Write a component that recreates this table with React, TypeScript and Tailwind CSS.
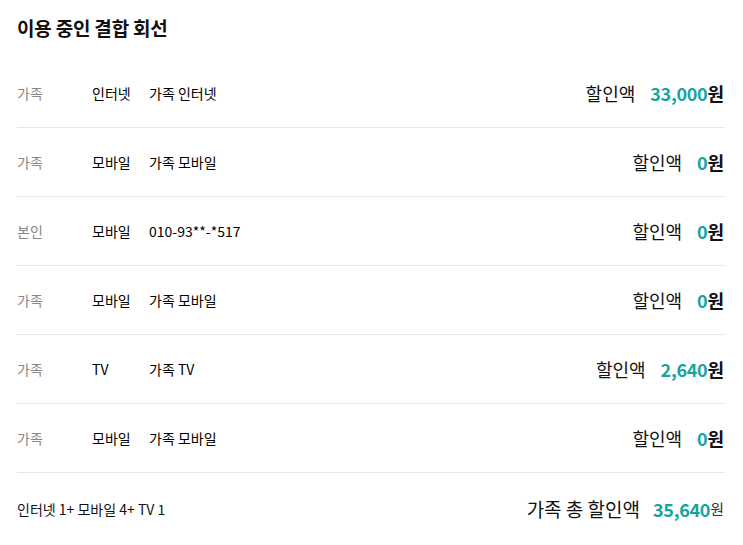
const rows = [
  { who: '가족', type: '인터넷', name: '가족 인터넷', amount: '33,000' },
  { who: '가족', type: '모바일', name: '가족 모바일', amount: '0' },
  { who: '본인', type: '모바일', name: '010-93**-*517', amount: '0' },
  { who: '가족', type: '모바일', name: '가족 모바일', amount: '0' },
  { who: '가족', type: 'TV', name: '가족 TV', amount: '2,640' },
  { who: '가족', type: '모바일', name: '가족 모바일', amount: '0' },
];

export default function App() {
  return (
    <div
      className="w-[743px] h-[545px] bg-white pl-[17px] pr-[18px] text-[#111]"
      style={{ fontFamily: '"Noto Sans CJK KR", "Noto Sans", sans-serif' }}
    >
      {/* Title */}
      <h2 className="h-[59px] pt-[16px] text-[19px] leading-[24px] font-bold tracking-[-0.2px]">
        이용 중인 결합 회선
      </h2>

      {/* Lines */}
      <ul>
        {rows.map((r, i) => (
          <li key={i} className="h-[69px] flex items-center border-b border-[#e6e6e6] text-[14px]">
            <span className="w-[75px] text-[#888]">{r.who}</span>
            <span className="w-[57px] text-black">{r.type}</span>
            <span className="flex-1 text-black">{r.name}</span>
            <span className="flex items-center pr-px">
              <span className="text-[18px] mr-[15px]">할인액</span>
              <span className="text-[18px] font-bold text-[#14a5a1] tracking-[-0.3px]">{r.amount}</span>
              <span className="text-[18px] font-bold">원</span>
            </span>
          </li>
        ))}
      </ul>

      {/* Total */}
      <div className="h-[72px] flex items-center justify-between">
        <span className="text-[14px]">인터넷 1+ 모바일 4+ TV 1</span>
        <span className="flex items-center pr-px">
          <span className="text-[19px] mr-[13px]">가족 총 할인액</span>
          <span className="text-[18px] font-bold text-[#14a5a1] tracking-[-0.3px]">35,640</span>
          <span className="text-[15px] text-[#333]">원</span>
        </span>
      </div>
    </div>
  );
}
